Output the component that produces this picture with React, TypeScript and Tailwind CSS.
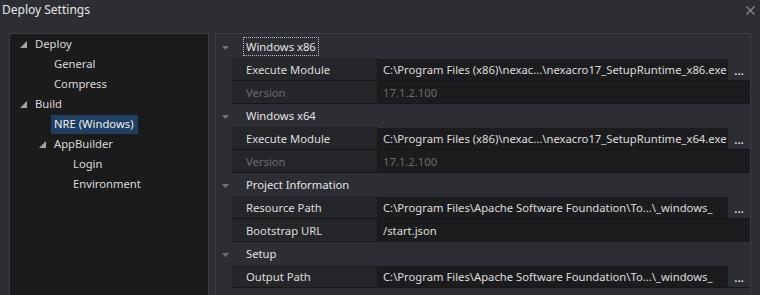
import React from "react";

const font = "font-['Noto_Sans',sans-serif]";

type TreeNode = { label: string; level: 0 | 1 | 2; expander?: boolean; selected?: boolean };

const treeNodes: TreeNode[] = [
  { label: "Deploy", level: 0, expander: true },
  { label: "General", level: 1 },
  { label: "Compress", level: 1 },
  { label: "Build", level: 0, expander: true },
  { label: "NRE (Windows)", level: 1, selected: true },
  { label: "AppBuilder", level: 1, expander: true },
  { label: "Login", level: 2 },
  { label: "Environment", level: 2 },
];

const indent = ["pl-[10px]", "pl-[29px]", "pl-[48px]"];

type Prop = { label: string; value: string; browse?: boolean; disabled?: boolean };
type Group = { title: string; focused?: boolean; props: Prop[] };

const groups: Group[] = [
  {
    title: "Windows x86",
    focused: true,
    props: [
      { label: "Execute Module", value: "C:\\Program Files (x86)\\nexac...\\nexacro17_SetupRuntime_x86.exe", browse: true },
      { label: "Version", value: "17.1.2.100", disabled: true },
    ],
  },
  {
    title: "Windows x64",
    props: [
      { label: "Execute Module", value: "C:\\Program Files (x86)\\nexac...\\nexacro17_SetupRuntime_x64.exe", browse: true },
      { label: "Version", value: "17.1.2.100", disabled: true },
    ],
  },
  {
    title: "Project Information",
    props: [
      { label: "Resource Path", value: "C:\\Program Files\\Apache Software Foundation\\To...\\_windows_", browse: true },
      { label: "Bootstrap URL", value: "/start.json" },
    ],
  },
  {
    title: "Setup",
    props: [
      { label: "Output Path", value: "C:\\Program Files\\Apache Software Foundation\\To...\\_windows_", browse: true },
    ],
  },
];

function Expander() {
  return (
    <svg width="7" height="7" viewBox="0 0 7 7" className="block">
      <polygon points="7,0 7,7 0,7" fill="#a3a3a3" />
    </svg>
  );
}

function TreeRow({ node }: { node: TreeNode }) {
  return (
    <div className={`h-[20px] flex items-center ${indent[node.level]}`}>
      <div className="w-[12px] flex items-center">{node.expander && <Expander />}</div>
      <span
        className={`h-[19px] pl-[3px] pr-[4px] flex items-center ${
          node.selected ? "bg-[#1f3e62] text-[#f0f0f0]" : "text-[#dadada]"
        }`}
      >
        {node.label}
      </span>
    </div>
  );
}

function GroupHeader({ title, focused }: { title: string; focused?: boolean }) {
  return (
    <div className="h-[23px] flex items-center bg-[#2d2e33]">
      <div className="w-[16px] flex items-center">
        <svg width="7" height="4" viewBox="0 0 7 4" className="ml-[6px] mt-[2px]">
          <polygon points="0,0 7,0 3.5,4" fill="#707176" />
        </svg>
      </div>
      <div className="pl-[11px] pt-[2px]">
        <span
          className={`px-[2px] py-[1px] border border-dotted ${
            focused ? "border-[#bdbdbd]" : "border-transparent"
          } text-[#e4e4e4]`}
        >
          {title}
        </span>
      </div>
    </div>
  );
}

function PropRow({ prop }: { prop: Prop }) {
  const textColor = prop.disabled ? "text-[#6b6b6d]" : "text-[#dedede]";
  return (
    <div className="h-[23px] flex bg-[#2d2e33]">
      <div className="w-[16px]" />
      <div className="flex-1 flex border-b border-[#18181a]">
        <div className={`w-[146px] bg-[#252629] border-r border-[#18181a] pl-[14px] pt-[2px] flex items-center ${textColor}`}>
          {prop.label}
        </div>
        {prop.browse ? (
          <div className="flex-1 flex">
            <div className="flex-1 mt-[1px] bg-[#1c1c1e] pl-[5px] pt-[1px] flex items-center text-[#dedede] whitespace-nowrap overflow-hidden">
              {prop.value}
            </div>
            <div className="w-[22px] flex items-end justify-center pb-[4px] text-[#d6d6d6] font-bold leading-none">
              ...
            </div>
          </div>
        ) : (
          <div className={`flex-1 bg-[#1c1c1e] pl-[5px] pt-[2px] flex items-center ${textColor}`}>{prop.value}</div>
        )}
      </div>
    </div>
  );
}

export default function App() {
  return (
    <div className={`w-[760px] h-[295px] overflow-hidden bg-[#2d2e33] flex flex-col text-[11.25px] ${font}`}>
      {/* Title bar */}
      <div className="h-[20px] flex items-center justify-between pl-[2px] pr-[5px]">
        <span className="text-[12px] text-[#e6e6e6]">Deploy Settings</span>
        <svg width="9" height="9" viewBox="0 0 9 9">
          <path d="M0.5 0.5 L8.5 8.5 M8.5 0.5 L0.5 8.5" stroke="#8a8a8d" strokeWidth="1.2" />
        </svg>
      </div>

      {/* Body */}
      <div className="flex-1 flex gap-[6px] pt-[13px] pl-[9px] pr-[9px] min-h-0">
        {/* Tree panel */}
        <div className="w-[200px] h-[290px] shrink-0 bg-[#1b1b1c] border border-[#3b3c40]">
          {treeNodes.map((n) => (
            <TreeRow key={n.label} node={n} />
          ))}
        </div>

        {/* Property grid */}
        <div className="flex-1 h-[290px] border border-[#3d3e43] pt-[1px] bg-[#2d2e33]">
          {groups.map((g) => (
            <div key={g.title}>
              <GroupHeader title={g.title} focused={g.focused} />
              {g.props.map((p) => (
                <PropRow key={g.title + p.label} prop={p} />
              ))}
            </div>
          ))}
        </div>
      </div>
    </div>
  );
}
